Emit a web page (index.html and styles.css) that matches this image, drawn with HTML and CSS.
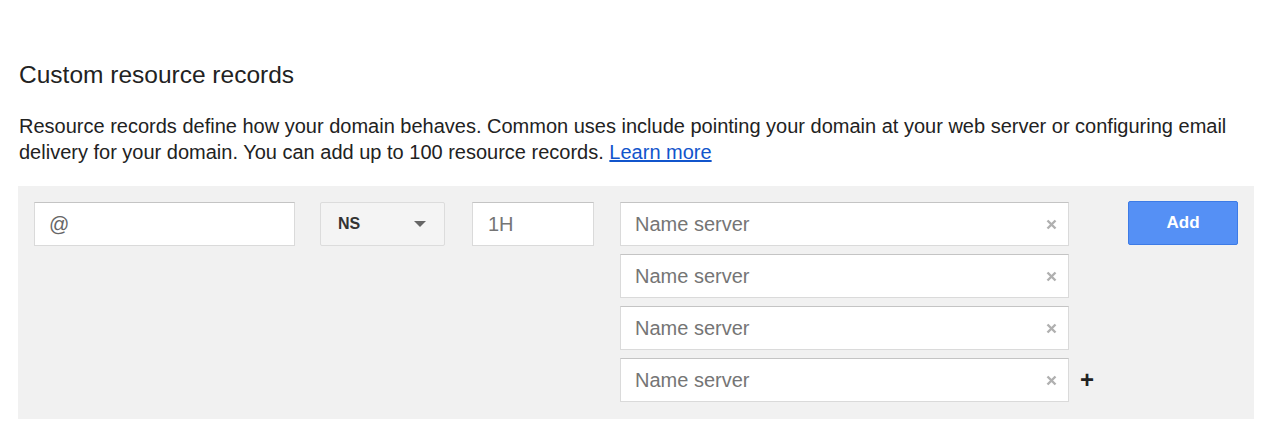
FILE: index.html
```html
<!DOCTYPE html>
<html>
<head>
<meta charset="utf-8">
<link rel="stylesheet" href="styles.css">
</head>
<body>
<div class="page">
  <h2 class="title">Custom resource records</h2>
  <p class="desc">Resource records define how your domain behaves. Common uses include pointing your domain at your web server or configuring email delivery for your domain. You can add up to 100 resource records. <a href="#" class="link">Learn more</a></p>
  <div class="panel">
    <div class="field name-field"><span class="val">@</span></div>
    <div class="select"><span class="sel-text">NS</span><span class="caret"></span></div>
    <div class="field ttl-field"><span class="ph">1H</span></div>
    <div class="servers">
      <div class="srow"><div class="field server"><span class="ph">Name server</span><svg class="x" width="11" height="11" viewBox="0 0 11 11"><path d="M1.5 1.5L9.5 9.5M9.5 1.5L1.5 9.5"/></svg></div></div>
      <div class="srow"><div class="field server"><span class="ph">Name server</span><svg class="x" width="11" height="11" viewBox="0 0 11 11"><path d="M1.5 1.5L9.5 9.5M9.5 1.5L1.5 9.5"/></svg></div></div>
      <div class="srow"><div class="field server"><span class="ph">Name server</span><svg class="x" width="11" height="11" viewBox="0 0 11 11"><path d="M1.5 1.5L9.5 9.5M9.5 1.5L1.5 9.5"/></svg></div></div>
      <div class="srow"><div class="field server"><span class="ph">Name server</span><svg class="x" width="11" height="11" viewBox="0 0 11 11"><path d="M1.5 1.5L9.5 9.5M9.5 1.5L1.5 9.5"/></svg></div><span class="plus">+</span></div>
    </div>
    <button class="add">Add</button>
  </div>
</div>
</body>
</html>
```
FILE: styles.css
```css
html, body { margin: 0; padding: 0; background: #fff; }
body { font-family: "Liberation Sans", Arial, sans-serif; color: #222; }
.page { padding: 61px 26px 0 18px; }
.title { margin: 0 0 0 1px; font-size: 24.5px; font-weight: normal; line-height: 28px; color: #222; }
.desc { margin: 24px 0 0 1px; font-size: 20px; line-height: 26px; color: #222; }
.link { color: #1155cc; text-decoration: underline; }
.panel { margin-top: 21px; background: #f1f1f1; padding: 16px 16px 18px 16px; display: flex; align-items: flex-start; height: 199px; box-sizing: content-box; }
.panel > * { flex-shrink: 0; }
.field { box-sizing: border-box; height: 44px; background: #fff; border: 1px solid #dadada; border-top-color: #c4c4c4; display: flex; align-items: center; padding: 0 14px; font-size: 20px; flex-shrink: 0; }
.name-field { width: 261px; }
.val { color: #666; }
.ph { color: #757575; }
.select { box-sizing: border-box; margin-left: 25px; width: 125px; height: 44px; border: 1px solid #dcdcdc; border-radius: 2px; background: #f4f4f4; display: flex; align-items: center; justify-content: space-between; padding: 0 18px 0 17px; }
.sel-text { font-weight: bold; font-size: 16px; color: #333; }
.caret { width: 0; height: 0; border-left: 6px solid transparent; border-right: 6px solid transparent; border-top: 6px solid #666; }
.ttl-field { margin-left: 27px; width: 122px; padding-left: 15px; }
.servers { margin-left: 26px; display: flex; flex-direction: column; gap: 8px; }
.srow { display: flex; align-items: center; position: relative; }
.server { width: 449px; justify-content: space-between; padding-right: 11px; }
.x { stroke: #b0b0b0; stroke-width: 2.4; fill: none; }
.plus { position: absolute; left: 460px; top: 10px; font-size: 24px; font-weight: bold; color: #222; line-height: 1; }
.add { margin-left: auto; width: 110px; height: 44px; border: 1px solid #3d7be6; border-radius: 2px; background: #5590f5; color: #fff; font-family: "Liberation Sans", Arial, sans-serif; font-weight: bold; font-size: 17px; margin-top: -1px; }
```
